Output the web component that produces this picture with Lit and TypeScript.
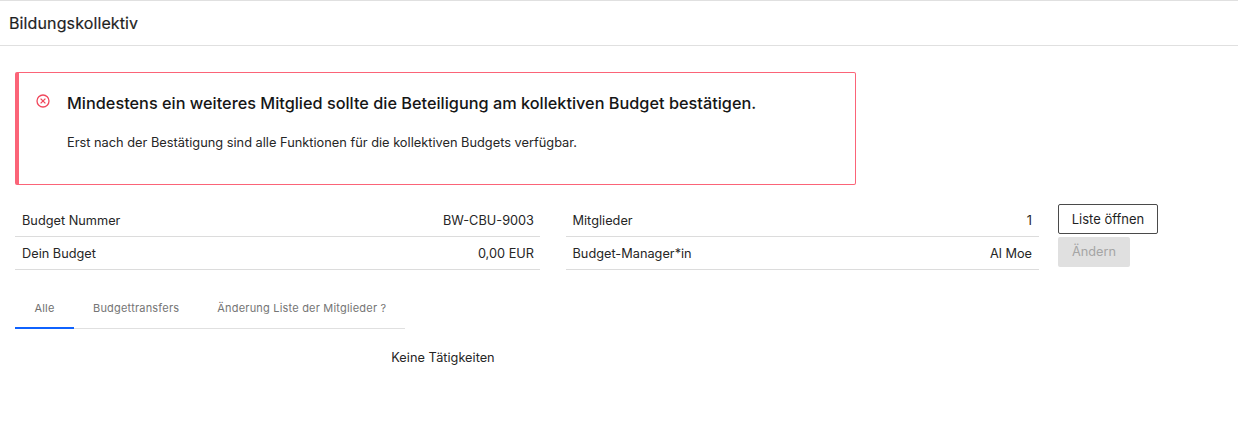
import { LitElement, html, css } from "lit";
import { customElement } from "lit/decorators.js";

@customElement("app-root")
export class AppRoot extends LitElement {
  static styles = css`
    :host { display: block; font-family: Inter, "Liberation Sans", sans-serif; color: #1f1f1f; background: #fff; height: 422px; overflow: hidden; }
    .head { height: 44px; border-top: 1px solid #e0e0e0; border-bottom: 1px solid #e0e0e0; display: flex; align-items: center; padding-left: 9px; font-size: 16px; letter-spacing: 0.12px; font-weight: 400; box-sizing: content-box; -webkit-text-stroke: 0.2px #1f1f1f; }
    .main { padding: 26px 0 0 15px; display: flex; flex-direction: column; }
    .alert { box-sizing: border-box; width: 841px; height: 113px; border: 1px solid #fb6478; border-left-width: 4px; border-radius: 2px; display: flex; gap: 17px; padding: 20px 0 0 17px; }
    .alert svg { flex: none; margin-top: 1px; }
    .alert h2 { margin: 0; font-size: 16.3px; font-weight: 500; line-height: 21px; color: #161616; white-space: nowrap; }
    .alert p { margin: 20px 0 0; font-size: 12.8px; line-height: 17px; color: #262626; white-space: nowrap; }
    .info { display: flex; margin-top: 19px; }
    .col { display: flex; flex-direction: column; }
    .c1 { width: 525px; margin-right: 26px; }
    .c2 { width: 473px; margin-right: 19px; }
    .row { height: 32px; border-bottom: 1px solid #dcdcdc; display: flex; justify-content: space-between; align-items: center; padding: 0 6px 0 7px; font-size: 12.75px; color: #262626; }
    .c2 .row { padding: 0 7px 0 6.5px; }
    .btns { display: flex; flex-direction: column; align-items: flex-start; gap: 3px; }
    .btn { box-sizing: border-box; height: 30px; border-radius: 2px; font-size: 13px; display: flex; align-items: center; justify-content: center; font-weight: 400; }
    .open { width: 100px; border: 1px solid #4a4a4a; color: #1f1f1f; }
    .change { width: 72px; background: #e0e0e0; color: #a5a5a5; padding-bottom: 2px; font-size: 12.75px; }
    .tabs { display: flex; width: 390px; margin-top: 19px; border-bottom: 1px solid #e0e0e0; height: 40px; box-sizing: border-box; font-size: 11px; color: #757575; letter-spacing: 0.2px; }
    .tab { flex: none; padding: 0 19px 2px; display: flex; align-items: center; height: 40px; box-sizing: border-box; white-space: nowrap; font-weight: 400; }
    .tab.on { width: 59px; justify-content: center; border-bottom: 2px solid #0f62fe; padding: 0; color: #6f6f6f; }
    .empty { width: 856px; text-align: center; margin-top: 21px; font-size: 12.75px; line-height: 16px; color: #262626; }
  `;

  render() {
    return html`
      <div class="head">Bildungskollektiv</div>
      <div class="main">
        <div class="alert">
          <svg width="14" height="14" viewBox="0 0 14 14" fill="none" stroke="#f0475c" stroke-width="1.3">
            <circle cx="7" cy="7" r="6"></circle>
            <path d="M4.6 4.6l4.8 4.8M9.4 4.6l-4.8 4.8"></path>
          </svg>
          <div>
            <h2>Mindestens ein weiteres Mitglied sollte die Beteiligung am kollektiven Budget bestätigen.</h2>
            <p>Erst nach der Bestätigung sind alle Funktionen für die kollektiven Budgets verfügbar.</p>
          </div>
        </div>
        <div class="info">
          <div class="col c1">
            <div class="row"><span>Budget Nummer</span><span>BW-CBU-9003</span></div>
            <div class="row"><span>Dein Budget</span><span>0,00 EUR</span></div>
          </div>
          <div class="col c2">
            <div class="row"><span>Mitglieder</span><span>1</span></div>
            <div class="row"><span>Budget-Manager*in</span><span>Al Moe</span></div>
          </div>
          <div class="btns">
            <div class="btn open">Liste öffnen</div>
            <div class="btn change">Ändern</div>
          </div>
        </div>
        <div class="tabs">
          <div class="tab on">Alle</div>
          <div class="tab">Budgettransfers</div>
          <div class="tab">Änderung Liste der Mitglieder ?</div>
        </div>
        <div class="empty">Keine Tätigkeiten</div>
      </div>
    `;
  }
}
